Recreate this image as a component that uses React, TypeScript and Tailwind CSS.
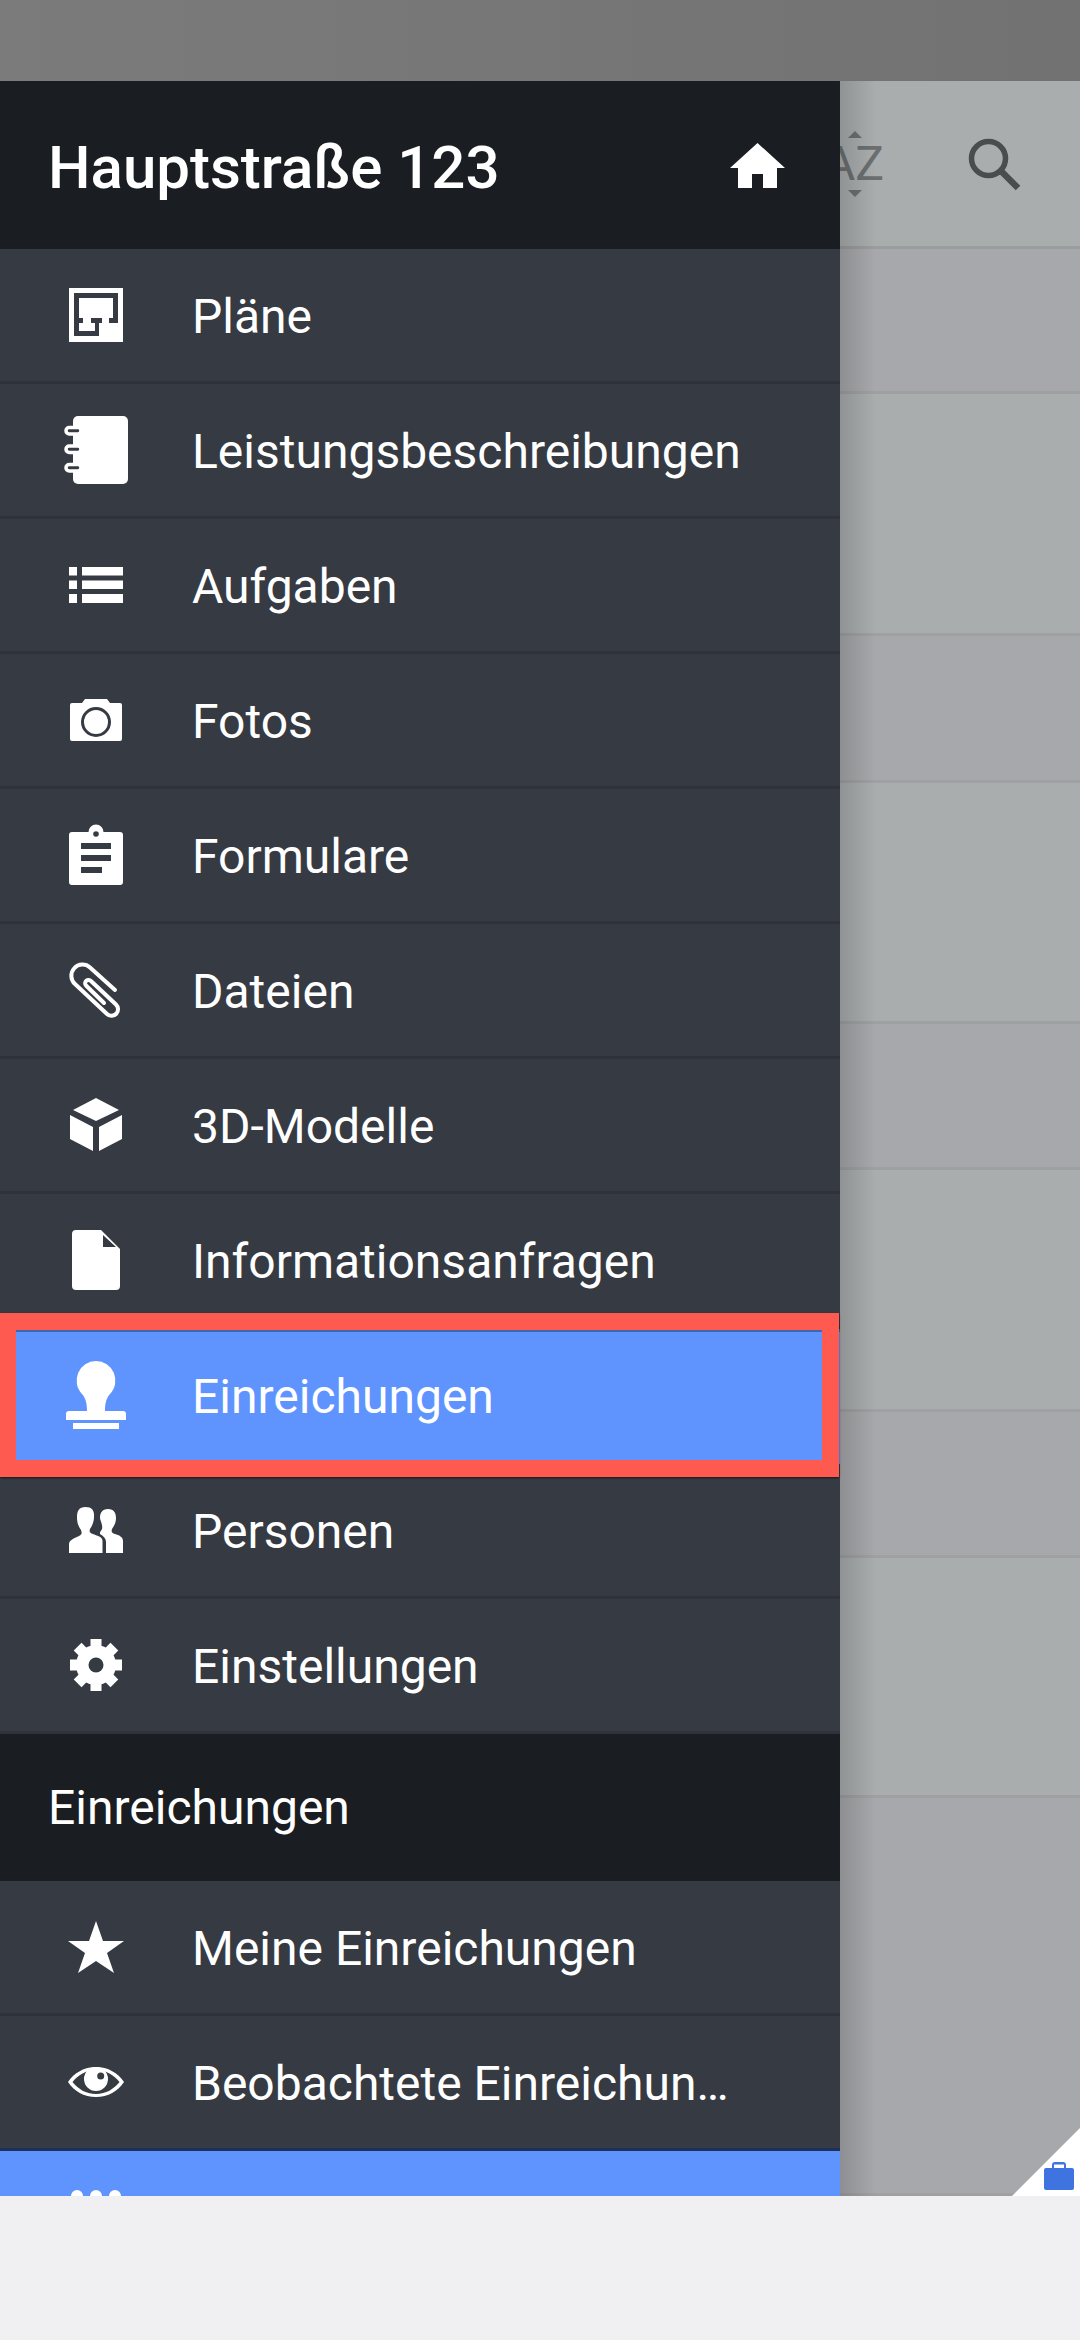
import type { ReactNode } from "react";

const DARK = "#363a43";

const ROW_TONES = [
  "h-[145px] bg-[#a7a8ab]",
  "h-[242px] bg-[#a9adad]",
  "h-[147px] bg-[#a7a8ab]",
  "h-[241px] bg-[#a9adad]",
  "h-[146px] bg-[#a7a8ab]",
  "h-[242px] bg-[#a9adad]",
  "h-[146px] bg-[#a7a8ab]",
  "h-[240px] bg-[#a9adad]",
  "flex-1 bg-[#a7a8ab]",
];

const Icon = ({ children }: { children: ReactNode }) => (
  <svg viewBox="0 0 72 72" className="h-[72px] w-[72px] shrink-0 fill-white">
    {children}
  </svg>
);

const PlansIcon = () => (
  <Icon>
    <path d="M9 9h54v54H9z" />
    <path
      fill={DARK}
      d="M14 14h44v30h-5V19H19v20h4v5h-4v8h16V44h-4v-5h11v5h-3v13H14zM49 39h4v5h-4z"
    />
  </Icon>
);

const NotebookIcon = () => (
  <Icon>
    <rect x="13" y="2" width="55" height="68" rx="5" />
    <g fill={DARK} stroke="#fff" strokeWidth="3.500">
      <rect x="6" y="13.500" width="15" height="6.500" rx="3.200" />
      <rect x="6" y="32" width="15" height="6.500" rx="3.200" />
      <rect x="6" y="50.500" width="15" height="6.500" rx="3.200" />
    </g>
  </Icon>
);

const TasksIcon = () => (
  <Icon>
    <path d="M9 18h8v8.500H9zM22 18h41v8.500H22zM9 31.500h8V40H9zM22 31.500h41V40H22zM9 45h8v9H9zM22 45h41v9H22z" />
  </Icon>
);

const CameraIcon = () => (
  <Icon>
    <path
      fillRule="evenodd"
      d="M12 19h10l3-4h22l3 4h10a2 2 0 0 1 2 2v34a2 2 0 0 1-2 2H12a2 2 0 0 1-2-2V21a2 2 0 0 1 2-2zM36 23a15 15 0 1 0 0 30 15 15 0 0 0 0-30zM36 26a12 12 0 1 1 0 24 12 12 0 0 1 0-24z"
    />
  </Icon>
);

const FormsIcon = () => (
  <Icon>
    <path
      fillRule="evenodd"
      d="M12 13h16.500a7.500 7.500 0 0 1 15 0H60a3 3 0 0 1 3 3v47a3 3 0 0 1-3 3H12a3 3 0 0 1-3-3V16a3 3 0 0 1 3-3zM36 12.200a2.800 2.800 0 1 0 0 5.600 2.800 2.800 0 0 0 0-5.600zM21 24v6h30v-6zM21 36v6h30v-6zM21 48v6h21v-6z"
    />
  </Icon>
);

const FilesIcon = () => (
  <Icon>
    <path
      d="M55 36 30 13.500A11 11 0 0 0 15 30l32 30a6.500 6.500 0 0 0 9-9.500L31 27a3.200 3.200 0 0 0-5 4.500L44 49"
      fill="none"
      stroke="#fff"
      strokeWidth="4"
      strokeLinecap="round"
    />
  </Icon>
);

const ModelIcon = () => (
  <Icon>
    <path d="M36 9 59 21 36 32 13 21zM10 26l23 12v24L10 50zM62 26 39 38v24l23-12z" />
  </Icon>
);

const DocumentIcon = () => (
  <Icon>
    <path
      fillRule="evenodd"
      d="M16 6h25l19 19v37a4 4 0 0 1-4 4H16a4 4 0 0 1-4-4V10a4 4 0 0 1 4-4zM43 11v12h13z"
    />
  </Icon>
);

const StampIcon = () => (
  <Icon>
    <path d="M36 2a19.500 19.500 0 0 1 14 33c-3.500 4-5 9-5 17h18a3 3 0 0 1 3 3v6H6v-6a3 3 0 0 1 3-3h18c0-8-1.500-13-5-17A19.500 19.500 0 0 1 36 2zM13 64h46v6H13z" />
  </Icon>
);

const PeopleIcon = () => (
  <Icon>
    <path d="M25.500 13c7 0 9 4 8.500 10 0 5-2 9-4 12-1 3 0 4 3 5 5 2 9.500 3 9.500 7v12H9v-9c0-4 6-6 10-8 3-1.500 3-3 2-6-3-4-4-8-4-13 0-6 2-10 8.500-10z" />
    <path d="M48 15c6 0 8 4 8 9 0 5-2 8-4 11-1 3 0 4 3 5 4 1 8 3 8 7v12H46V48c0-3-2-6-6-8-.5-2 1-3 2-5 1-4-2-9-2-11 0-5 2-9 8-9z" />
  </Icon>
);

const SettingsIcon = () => (
  <Icon>
    {[0, 45, 90, 135, 180, 225, 270, 315].map((angle) => (
      <rect
        key={angle}
        x="30.500"
        y="10"
        width="11"
        height="14"
        transform={`rotate(${angle} 36 36)`}
      />
    ))}
    <circle cx="36" cy="36" r="20" />
    <circle cx="36" cy="36" r="7.500" fill={DARK} />
  </Icon>
);

const StarIcon = () => (
  <Icon>
    <path d="M36 10 43 30H64L47 42l7 20-18-12-18 12 7-20L8 30h21z" />
  </Icon>
);

const EyeIcon = () => (
  <Icon>
    <path
      fillRule="evenodd"
      d="M36 21c12 0 22 6 28 15-6 9-16 15-28 15S14 45 8 36c6-9 16-15 28-15zM36 24c-10 0-18 5-23.500 12 5.500 7 13.500 12 23.500 12s18-5 23.500-12C54 29 46 24 36 24z"
    />
    <path
      fillRule="evenodd"
      d="M36 21a12 12 0 1 1 0 24 12 12 0 0 1 0-24zM40.700 26.500a3.500 3.500 0 1 0 0 7 3.500 3.500 0 0 0 0-7z"
    />
  </Icon>
);

const HomeIcon = () => (
  <svg viewBox="0 0 55 45" className="h-[45px] w-[55px] fill-white">
    <path d="M27.500 0 55 25h-8v20H33V31H22v14H8V25H0z" />
  </svg>
);

const PROJECT_ITEMS = [
  { label: "Pläne", icon: <PlansIcon /> },
  { label: "Leistungsbeschreibungen", icon: <NotebookIcon /> },
  { label: "Aufgaben", icon: <TasksIcon /> },
  { label: "Fotos", icon: <CameraIcon /> },
  { label: "Formulare", icon: <FormsIcon /> },
  { label: "Dateien", icon: <FilesIcon /> },
  { label: "3D-Modelle", icon: <ModelIcon /> },
  { label: "Informationsanfragen", icon: <DocumentIcon /> },
  { label: "Einreichungen", icon: <StampIcon />, active: true },
  { label: "Personen", icon: <PeopleIcon /> },
  { label: "Einstellungen", icon: <SettingsIcon /> },
];

function MenuRow({
  label,
  icon,
  active,
}: {
  label: string;
  icon: ReactNode;
  active?: boolean;
}) {
  return (
    <div
      className={`flex h-[135px] shrink-0 items-center border-b-[3px] pl-[60px] ${
        active
          ? "border-[#5f93fe] bg-[#5f93fe] shadow-[inset_0_3px_0_#3f66b0]"
          : "border-[#2f323a] bg-[#363a43]"
      }`}
    >
      {icon}
      <span className="mt-[3px] ml-[60px] min-w-0 truncate pr-[90px] text-[48px] leading-[62px] text-white">
        {label}
      </span>
    </div>
  );
}

export default function App() {
  return (
    <div className="flex h-[2340px] w-[1080px] flex-col overflow-hidden bg-[#f0f0f2] font-['Roboto',sans-serif]">
      <div className="relative h-[2196px] shrink-0 overflow-hidden">
        {/* dimmed screen behind the drawer */}
        <div className="h-[81px] bg-gradient-to-r from-[#7b7b7b] to-[#727272]" />
        <div className="flex h-[168px] items-center justify-end border-b-[3px] border-[#9a9d9d] bg-[#a9adad] pr-[59px]">
          <div className="relative mr-[83px] flex items-center">
            <span className="text-[48px] leading-none text-[#6c6f70]">AZ</span>
            <svg viewBox="0 0 14 7" className="absolute -top-[9px] left-[24px] h-[7px] w-[14px] fill-[#6c6f70]">
              <path d="M7 0l7 7H0z" />
            </svg>
            <svg viewBox="0 0 14 7" className="absolute -bottom-[9px] left-[24px] h-[7px] w-[14px] fill-[#6c6f70]">
              <path d="M0 0h14L7 7z" />
            </svg>
          </div>
          <svg viewBox="0 0 54 54" className="h-[54px] w-[54px]">
            <circle cx="21.500" cy="21.500" r="17" fill="none" stroke="#4a4d4f" strokeWidth="5.500" />
            <path d="m34 34 17 17" stroke="#4a4d4f" strokeWidth="6.500" />
          </svg>
        </div>
        <div className="flex h-[1947px] flex-col">
          {ROW_TONES.map((tone, index) => (
            <div key={index} className={`${tone} border-b-[3px] border-[#9ea0a1]`} />
          ))}
        </div>
        {/* corner badge */}
        <div className="absolute right-0 bottom-0 h-[68px] w-[68px] bg-white [clip-path:polygon(100%_0,100%_100%,0_100%)]" />
        <svg viewBox="0 0 30 28" className="absolute right-[6px] bottom-[6px] h-[28px] w-[30px] fill-[#3f74e0]">
          <path
            fillRule="evenodd"
            d="M2 6h6V3a3 3 0 0 1 3-3h8a3 3 0 0 1 3 3v3h6a2 2 0 0 1 2 2v18a2 2 0 0 1-2 2H2a2 2 0 0 1-2-2V8a2 2 0 0 1 2-2zM10 2.500V6h10V2.500z"
          />
        </svg>

        {/* drawer */}
        <div className="absolute top-[81px] bottom-0 left-0 flex w-[840px] flex-col overflow-hidden bg-[#363a43]">
          <div className="flex h-[168px] shrink-0 items-center justify-between bg-[#1a1d22] pr-[55px] pl-[48px]">
            <span className="mt-[6px] text-[60px] leading-[72px] font-medium text-white">
              Hauptstraße 123
            </span>
            <HomeIcon />
          </div>
          {PROJECT_ITEMS.map((item) => (
            <MenuRow key={item.label} {...item} />
          ))}
          <div className="flex h-[147px] shrink-0 items-center bg-[#1a1d22] pl-[48px] text-[48px] leading-[62px] text-white">
            <span className="mt-[1px]">Einreichungen</span>
          </div>
          <MenuRow label="Meine Einreichungen" icon={<StarIcon />} />
          <MenuRow label="Beobachtete Einreichungen" icon={<EyeIcon />} />
          <div className="relative -mt-[3px] flex-1 border-t-[3px] border-[#1d3158] bg-[#5f93fe]">
            <div className="absolute top-[39px] left-[71px] flex gap-[7px]">
              <span className="h-[12px] w-[12px] rounded-full bg-white" />
              <span className="h-[12px] w-[12px] rounded-full bg-white" />
              <span className="h-[12px] w-[12px] rounded-full bg-white" />
            </div>
          </div>
        </div>
        {/* drawer edge shadow */}
        <div className="absolute top-[81px] bottom-0 left-[840px] w-[36px] bg-gradient-to-r from-black/15 to-transparent" />

        {/* highlight around the active row */}
        <div className="absolute top-[1313px] left-0 h-[164px] w-[839px] border-[17px] border-l-[16px] border-[#ff5a4f] shadow-[0_1px_2px_rgba(0,0,0,0.6)]" />
      </div>
    </div>
  );
}
